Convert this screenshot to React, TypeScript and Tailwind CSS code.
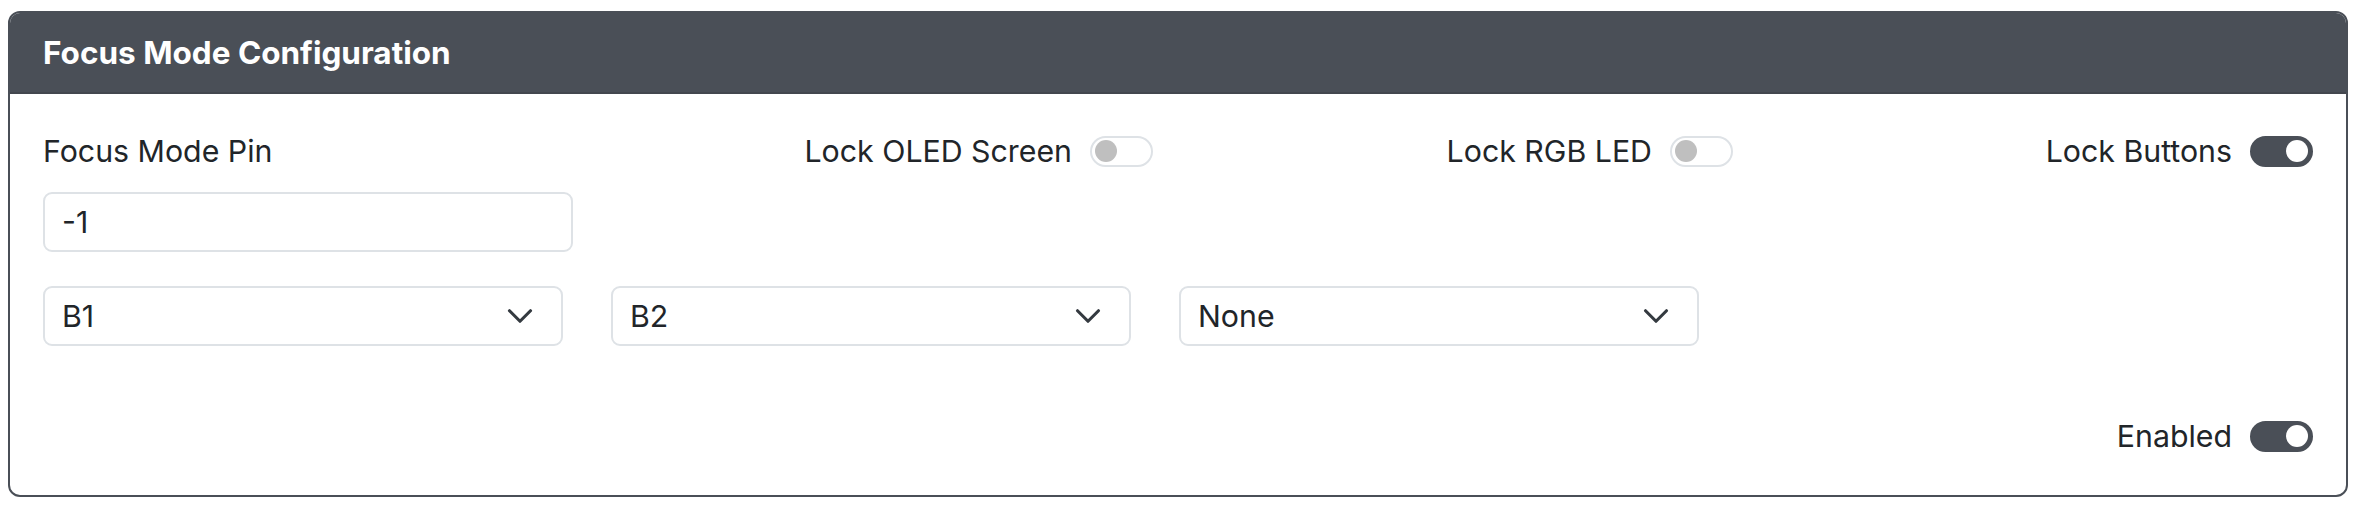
const Switch = ({ on }: { on: boolean }) => (
  <span
    className={
      on
        ? 'flex h-[31px] w-[63px] shrink-0 items-center justify-end rounded-full border-2 border-[#4a4f57] bg-[#4a4f57] px-[3px]'
        : 'flex h-[31px] w-[63px] shrink-0 items-center justify-start rounded-full border-2 border-[#dee2e6] bg-white px-[3px]'
    }
  >
    <span className={on ? 'h-[22px] w-[22px] rounded-full bg-white' : 'h-[22px] w-[22px] rounded-full bg-[#bfbfbf]'} />
  </span>
);

const Toggle = ({ label, on }: { label: string; on: boolean }) => (
  <div className="flex h-[46px] items-center justify-end gap-[18px]">
    <span>{label}</span>
    <Switch on={on} />
  </div>
);

const Select = ({ value }: { value: string }) => (
  <div className="flex h-[60px] w-[520px] items-center justify-between rounded-[9px] border-2 border-[#dee2e6] bg-white pl-[17px] pr-[27px]">
    <span>{value}</span>
    <svg className="h-[28px] w-[28px] text-[#343a40]" viewBox="0 0 16 16" fill="none" stroke="currentColor" strokeWidth={1.8} strokeLinecap="round" strokeLinejoin="round">
      <path d="m2 5 6 6 6-6" />
    </svg>
  </div>
);

export default function App() {
  return (
    <div className="min-h-[508px] bg-white pl-[8px] pr-[12px] pt-[11px] font-['Inter',sans-serif] text-[30.3px] leading-[46px] text-[#212529]">
      <div className="h-[486px] w-[2340px] overflow-hidden rounded-[12px] border-2 border-[#4a4f57]">
        <div className="flex h-[81px] items-center border-b-2 border-[#43474e] bg-[#4a4f57] px-[33px]">
          <h1 className="text-[31.5px] font-bold text-white">Focus Mode Configuration</h1>
        </div>
        <div className="px-[33px] pt-[34px]">
          <div className="grid grid-cols-4 gap-x-[50px]">
            <div>
              <label className="block">Focus Mode Pin</label>
              <div className="mt-[18px] flex h-[60px] items-center rounded-[9px] border-2 border-[#dee2e6] px-[17px]">-1</div>
            </div>
            <Toggle label="Lock OLED Screen" on={false} />
            <Toggle label="Lock RGB LED" on={false} />
            <Toggle label="Lock Buttons" on={true} />
          </div>
          <div className="mt-[34px] flex gap-[48px]">
            <Select value="B1" />
            <Select value="B2" />
            <Select value="None" />
          </div>
          <div className="mt-[67px]">
            <Toggle label="Enabled" on={true} />
          </div>
        </div>
      </div>
    </div>
  );
}
